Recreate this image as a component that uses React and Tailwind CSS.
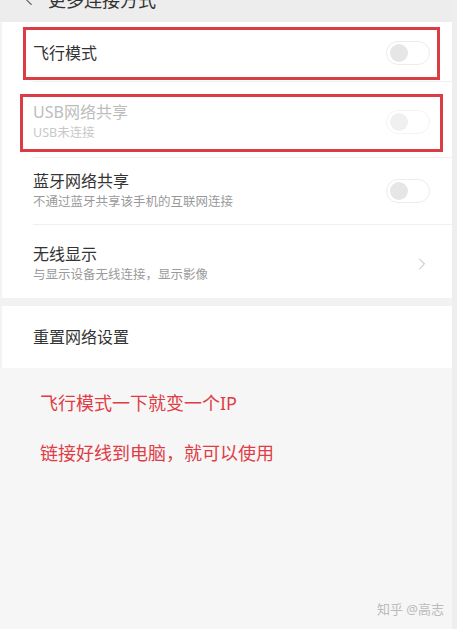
import { ChevronLeft, ChevronRight } from 'lucide-react';

const FONT = { fontFamily: '"Noto Sans", "Noto Sans CJK SC", sans-serif' };

function Toggle({ faded }) {
  return (
    <div
      className={`w-[44px] h-[24px] rounded-full border flex items-center px-[3px] ${
        faded ? 'border-[#f4f4f4]' : 'border-[#ececec]'
      }`}
    >
      <div className={`w-[18px] h-[18px] rounded-full ${faded ? 'bg-[#f0f0f0]' : 'bg-[#e6e6e6]'}`} />
    </div>
  );
}

function Row({ title, sub, right, muted, divider, h }) {
  return (
    <div className={`flex items-center pr-[22px] ${h} ${divider ? 'border-b border-[#f0f0f0]' : ''}`}>
      <div className="flex-1 flex flex-col">
        <span className={`text-[16px] leading-[20px] ${muted ? 'text-[#bdbdbd]' : 'text-[#333]'}`}>{title}</span>
        {sub && (
          <span className={`text-[12.5px] leading-[18px] mt-[2px] ${muted ? 'text-[#c8c8c8]' : 'text-[#9a9a9a]'}`}>
            {sub}
          </span>
        )}
      </div>
      {right}
    </div>
  );
}

export default function App() {
  return (
    <div className="w-[457px] h-[629px] overflow-hidden flex bg-[#f6f6f6]" style={FONT}>
      <div className="w-[452px] flex flex-col">
        {/* title bar, scrolled up past the top edge */}
        <div className="h-[36px] mt-[-14px] bg-[#ededed] flex items-center pl-[20px] gap-[10px] pb-[8px] text-[#333]">
          <ChevronLeft size={18} strokeWidth={1.5} className="text-[#666]" />
          <span className="text-[18px]">更多连接方式</span>
        </div>

        <div className="bg-white border-l-2 border-[#f3f3f3] pl-[31px] pt-[2px]">
          <div className="relative">
            <Row title="飞行模式" right={<Toggle />} divider h="h-[58px]" />
            <div className="absolute left-[-10px] right-[12px] top-[3px] h-[53px] border-[3px] border-[#dc3d45]" />
          </div>
          <div className="relative">
            <Row title="USB网络共享" sub="USB未连接" right={<Toggle faded />} muted divider h="h-[76px] pt-[4px]" />
            <div className="absolute left-[-13px] right-[9px] top-[12px] h-[58px] border-[3px] border-[#dc3d45]" />
          </div>
          <Row title="蓝牙网络共享" sub="不通过蓝牙共享该手机的互联网连接" right={<Toggle />} divider h="h-[67px]" />
          <Row
            title="无线显示"
            sub="与显示设备无线连接，显示影像"
            right={<ChevronRight size={20} strokeWidth={1.2} className="text-[#b5b5b5] mr-[-2px]" />}
            h="h-[73px] pt-[4px]"
          />
        </div>

        <div className="h-[8px] bg-[#f2f2f2]" />

        <div className="bg-white border-l-2 border-[#f3f3f3] pl-[31px] h-[62px] flex items-center">
          <span className="text-[16px] text-[#333]">重置网络设置</span>
        </div>

        <div className="flex-1 flex flex-col pl-[40px] pt-[23px] gap-[26px] text-[18px] leading-[24px] text-[#e03c45]">
          <span>飞行模式一下就变一个IP</span>
          <span>链接好线到电脑，就可以使用</span>
        </div>

        <div className="self-end pr-[8px] pb-[10px] text-[13px] text-[#bbbbbb]">知乎 @高志</div>
      </div>
      <div className="w-[5px] bg-[#eeeeee]" />
    </div>
  );
}
